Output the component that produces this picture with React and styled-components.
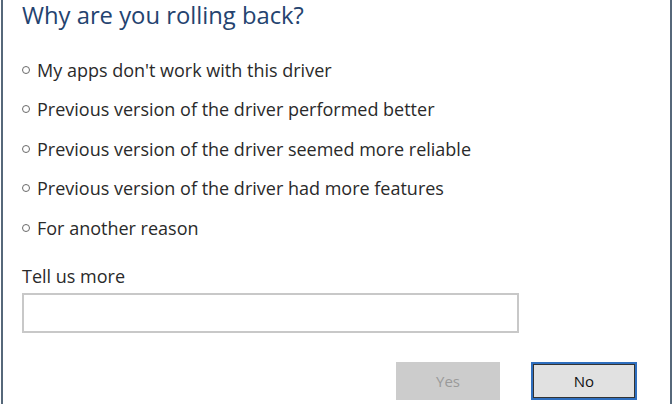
import React from "react";
import styled, { createGlobalStyle } from "styled-components";

const Global = createGlobalStyle`
  html, body { margin: 0; padding: 0; background: #fff; }
  body { font-family: "Open Sans", "Noto Sans", sans-serif; }
`;

const Dialog = styled.div`
  box-sizing: border-box;
  height: 404px;
  background: #fff;
  border-left: 2px solid #56687a;
  border-right: 2px solid #56687a;
  margin-left: 1px;
  width: 671px;
  padding: 2px 0 0 19px;
  display: flex;
  flex-direction: column;
  overflow: hidden;
`;

const Title = styled.h1`
  margin: 0;
  font-weight: 400;
  font-size: 23.8px;
  line-height: 26px;
  color: #24436f;
`;

const Options = styled.div`
  display: flex;
  flex-direction: column;
  margin-top: 22px;
`;

const Option = styled.label`
  display: flex;
  align-items: center;
  height: 39.5px;
  font-size: 18px;
  color: #2a2a2a;
  gap: 7px;
`;

const Radio = styled.span`
  box-sizing: border-box;
  width: 8px;
  height: 8px;
  border: 1px solid #6a6a6a;
  border-radius: 50%;
  flex: none;
`;

const Label = styled.div`
  font-size: 18px;
  color: #2a2a2a;
  margin-top: 17px;
  line-height: 22px;
`;

const Input = styled.div`
  box-sizing: border-box;
  width: 497px;
  height: 40px;
  border: 2px solid #c8c8c8;
  margin-top: 6px;
  background: #fff;
`;

const Buttons = styled.div`
  display: flex;
  gap: 31px;
  margin-top: 29px;
  padding-left: 374px;
`;

const Button = styled.div`
  box-sizing: border-box;
  width: ${(p) => (p.$disabled ? "104px" : "106px")};
  height: 38px;
  display: flex;
  align-items: center;
  justify-content: center;
  font-size: 15px;
  background: ${(p) => (p.$disabled ? "#cccccc" : "#e1e1e1")};
  color: ${(p) => (p.$disabled ? "#9a9a9a" : "#111")};
  border: ${(p) => (p.$focused ? "2px solid #2f6fbf" : "none")};
  box-shadow: ${(p) => (p.$focused ? "inset 0 0 0 1px #333" : "none")};
`;

const options = [
  "My apps don't work with this driver",
  "Previous version of the driver performed better",
  "Previous version of the driver seemed more reliable",
  "Previous version of the driver had more features",
  "For another reason",
];

export default function App() {
  return (
    <>
      <Global />
      <Dialog>
        <Title>Why are you rolling back?</Title>
        <Options>
          {options.map((o) => (
            <Option key={o}>
              <Radio />
              {o}
            </Option>
          ))}
        </Options>
        <Label>Tell us more</Label>
        <Input />
        <Buttons>
          <Button $disabled>Yes</Button>
          <Button $focused>No</Button>
        </Buttons>
      </Dialog>
    </>
  );
}
